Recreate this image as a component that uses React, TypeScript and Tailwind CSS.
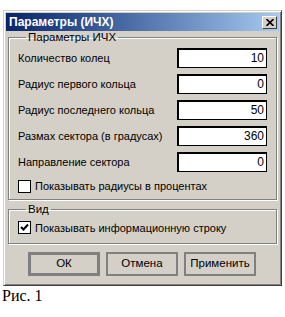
import { useState } from 'react'

const FIELDS = [
  { label: 'Количество колец', value: '10' },
  { label: 'Радиус первого кольца', value: '0' },
  { label: 'Радиус последнего кольца', value: '50' },
  { label: 'Размах сектора (в градусах)', value: '360' },
  { label: 'Направление сектора', value: '0' },
]

function Check({ checked }: { checked: boolean }) {
  return (
    <span className="w-[13px] h-[13px] bg-white border border-black flex items-center justify-center shrink-0">
      {checked && (
        <svg width="9" height="9" viewBox="0 0 9 9">
          <path d="M1 4 L3.5 6.5 L8 1.5" stroke="#000" strokeWidth="2" fill="none" />
        </svg>
      )}
    </span>
  )
}

function Btn({ label, primary }: { label: string; primary?: boolean }) {
  return (
    <button
      className={
        'w-[72px] h-[24px] bg-[#d4d0c8] text-black text-[11.5px] font-normal flex items-center justify-center ' +
        (primary ? 'border-[3px] border-[#808080]' : 'border-2 border-[#808080]')
      }
    >
      {label}
    </button>
  )
}

export default function App() {
  const [values] = useState(FIELDS)

  return (
    <div className="w-[285px] h-[317px] bg-white font-['Liberation_Sans',Arial,sans-serif] text-[11px] text-black overflow-hidden">
      {/* Dialog window */}
      <div className="mt-[10px] ml-[3px] w-[279px] h-[276px] bg-[#d4d0c8] border border-[#d4d0c8] border-r-[#404040] border-b-[#404040] shadow-[inset_1px_1px_0_#fff,inset_-1px_-1px_0_#808080] p-[2px] flex flex-col">
        {/* Title bar */}
        <div className="h-[18px] bg-gradient-to-r from-[#0a246a] to-[#a6caf0] flex items-center justify-between pl-[3px] pr-[2px]">
          <span className="text-white font-bold text-[12px] leading-none">Параметры (ИЧХ)</span>
          <span className="w-[15px] h-[13px] bg-[#d4d0c8] border border-white border-r-[#404040] border-b-[#404040] flex items-center justify-center">
            <svg width="8" height="7" viewBox="0 0 8 7">
              <path d="M0.5 0 L7.5 7 M7.5 0 L0.5 7" stroke="#000" strokeWidth="1.6" />
            </svg>
          </span>
        </div>

        {/* Group: parameters */}
        <fieldset className="mt-0 mx-[2px] border border-[#808080] shadow-[1px_1px_0_#fff,inset_1px_1px_0_#fff] px-[9px] pb-[4px]">
          <legend className="ml-[8px] px-[2px] text-[11.5px] leading-[13px]">Параметры ИЧХ</legend>
          <div className="flex flex-col gap-[6px] pt-[4px]">
            {values.map((f) => (
              <div key={f.label} className="flex items-center justify-between h-[20px]">
                <span>{f.label}</span>
                <div className="w-[90px] h-[20px] bg-white border-2 border-black border-r-[1px] border-b-[1px] text-right pr-[2px] text-[12px] leading-[17px]">
                  {f.value}
                </div>
              </div>
            ))}
            <label className="flex items-center gap-[4px]">
              <Check checked={false} />
              <span>Показывать радиусы в процентах</span>
            </label>
          </div>
        </fieldset>

        {/* Group: view */}
        <fieldset className="mt-[3px] mx-[2px] border border-[#808080] shadow-[1px_1px_0_#fff,inset_1px_1px_0_#fff] px-[9px] pb-[7px]">
          <legend className="ml-[8px] px-[2px] text-[11.5px] leading-[13px]">Вид</legend>
          <label className="flex items-center gap-[4px] pt-[4px]">
            <Check checked={true} />
            <span>Показывать информационную строку</span>
          </label>
        </fieldset>

        {/* Buttons */}
        <div className="flex gap-[6px] pl-[22px] pt-[8px]">
          <Btn label="ОК" primary />
          <Btn label="Отмена" />
          <Btn label="Применить" />
        </div>
      </div>

      <div className="pl-[2px] pt-[1px] font-['Liberation_Serif','Times_New_Roman',serif] text-[16px] leading-[18px]">
        Рис. 1
      </div>
    </div>
  )
}
